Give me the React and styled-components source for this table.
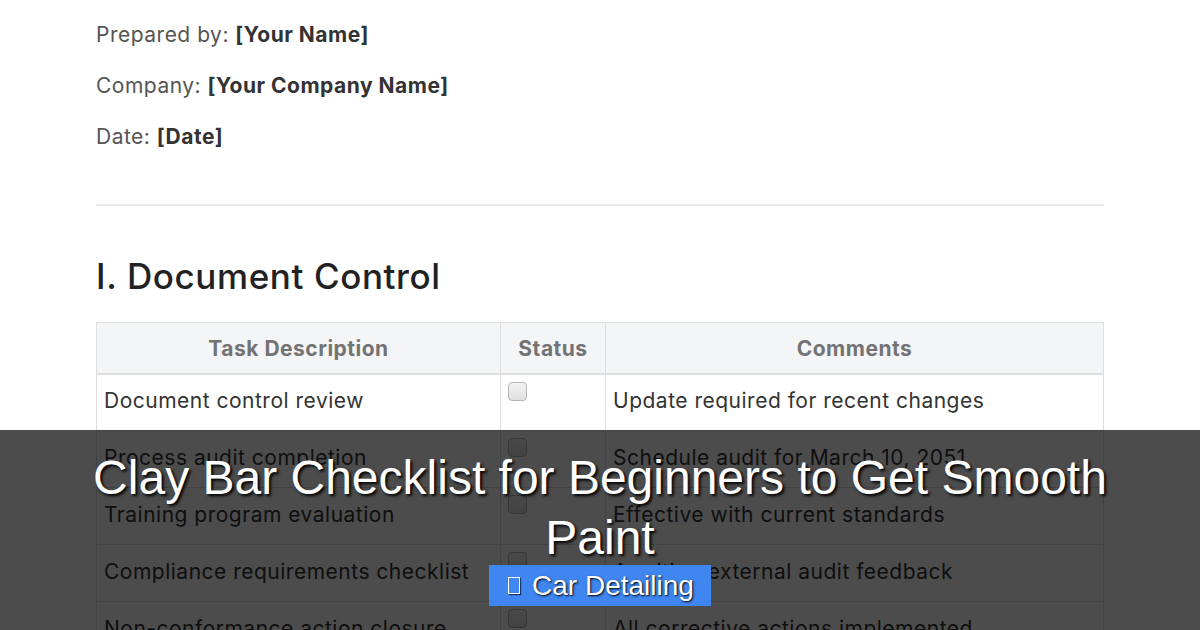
import styled, { createGlobalStyle } from 'styled-components'

const GlobalStyle = createGlobalStyle`
  html, body {
    margin: 0;
    padding: 0;
    background: #ffffff;
  }
  body {
    width: 1200px;
    height: 630px;
    overflow: hidden;
    font-family: Inter, 'Noto Sans', sans-serif;
  }
`

const Page = styled.div`
  position: relative;
  width: 1200px;
  height: 630px;
  overflow: hidden;
`

const Doc = styled.div`
  padding: 20px 96px 0;
  letter-spacing: 0.5px;
`

const Meta = styled.p`
  margin: 0 0 21px;
  font-size: 21px;
  line-height: 30px;
  color: #555555;

  strong {
    color: #333333;
    font-weight: 700;
  }
`

const Divider = styled.hr`
  border: none;
  border-top: 2px solid #e8e8e8;
  margin: 52px 0 0;
`

const Heading = styled.h2`
  margin: 48px 0 0;
  font-size: 35px;
  line-height: 44px;
  font-weight: 500;
  letter-spacing: 0.6px;
  color: #222222;
`

const Table = styled.div`
  margin-top: 24px;
  display: grid;
  grid-template-columns: 404px 105px 1fr;
  border-left: 1px solid #dedede;
  border-top: 1px solid #dedede;
`

const HeadCell = styled.div`
  box-sizing: border-box;
  height: 52px;
  display: flex;
  align-items: center;
  justify-content: center;
  background: #f4f5f7;
  border-right: 1px solid #dedede;
  border-bottom: 2px solid #dedede;
  font-size: 21px;
  font-weight: 700;
  color: #737373;
`

const Cell = styled.div`
  box-sizing: border-box;
  height: ${({ first }) => (first ? '56px' : '57px')};
  padding: 0 7px 4px;
  display: flex;
  align-items: ${({ top }) => (top ? 'flex-start' : 'center')};
  border-right: 1px solid #dedede;
  border-bottom: 1px solid #dedede;
  font-size: 21px;
  color: #333333;
  white-space: nowrap;
`

const Check = styled.span`
  display: block;
  margin-top: 7px;
  width: 19px;
  height: 19px;
  box-sizing: border-box;
  border: 1px solid #b5b5b5;
  border-radius: 4px;
  background: linear-gradient(#f2f2f2, #e0e0e0);
`

const Overlay = styled.div`
  position: absolute;
  left: 0;
  right: 0;
  bottom: 0;
  height: 200px;
  box-sizing: border-box;
  padding-top: 18px;
  background: rgba(0, 0, 0, 0.7);
  display: flex;
  flex-direction: column;
  align-items: center;
`

const Title = styled.h1`
  margin: 0;
  max-width: 1060px;
  text-align: center;
  font-family: 'Liberation Sans', Arial, sans-serif;
  font-weight: 400;
  font-size: 48px;
  line-height: 60px;
  color: #ffffff;
  text-shadow: 2px 2px 3px #000000;
`

const Tag = styled.div`
  margin-top: -3px;
  display: flex;
  align-items: center;
  gap: 12px;
  height: 41px;
  padding: 0 17px 0 19px;
  background: #3f86f0;
  font-family: 'Liberation Sans', Arial, sans-serif;
  font-size: 28px;
  color: #ffffff;
  text-shadow: 1px 1px 2px #000000;
`

const Tofu = styled.span`
  display: inline-block;
  width: 12px;
  height: 17px;
  box-sizing: border-box;
  border: 1.5px solid #ffffff;
  box-shadow: 1px 1px 1px rgba(0, 0, 0, 0.6);
`

const rows = [
  ['Document control review', 'Update required for recent changes'],
  ['Process audit completion', 'Schedule audit for March 10, 2051'],
  ['Training program evaluation', 'Effective with current standards'],
  ['Compliance requirements checklist', 'Awaiting external audit feedback'],
  ['Non-conformance action closure', 'All corrective actions implemented'],
]

export default function App() {
  return (
    <Page>
      <GlobalStyle />
      <Doc>
        <Meta>
          Prepared by: <strong>[Your Name]</strong>
        </Meta>
        <Meta>
          Company: <strong>[Your Company Name]</strong>
        </Meta>
        <Meta>
          Date: <strong>[Date]</strong>
        </Meta>
        <Divider />
        <Heading>I. Document Control</Heading>
        <Table>
          <HeadCell>Task Description</HeadCell>
          <HeadCell>Status</HeadCell>
          <HeadCell>Comments</HeadCell>
          {rows.map(([task, comment], i) => [
            <Cell key={`t${i}`} first={i === 0}>{task}</Cell>,
            <Cell key={`s${i}`} first={i === 0} top>
              <Check />
            </Cell>,
            <Cell key={`c${i}`} first={i === 0}>{comment}</Cell>,
          ])}
        </Table>
      </Doc>
      <Overlay>
        <Title>Clay Bar Checklist for Beginners to Get Smooth Paint</Title>
        <Tag>
          <Tofu />
          Car Detailing
        </Tag>
      </Overlay>
    </Page>
  )
}
